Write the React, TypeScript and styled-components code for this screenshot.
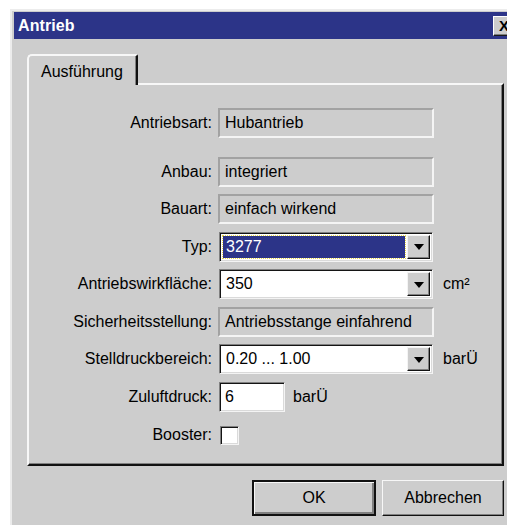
import React from "react";
import styled, { createGlobalStyle } from "styled-components";

const Global = createGlobalStyle`
  html, body {
    margin: 0;
    padding: 0;
    background: #ffffff;
    overflow: hidden;
  }
  body {
    font-family: "Liberation Sans", Arial, sans-serif;
    font-size: 16px;
    color: #000;
  }
`;

const GRAY = "#cdcdcd";
const NAVY = "#2c3488";

const Page = styled.div`
  width: 507px;
  height: 525px;
  padding: 9px 0 0 10px;
  box-sizing: border-box;
  overflow: hidden;
`;

const Window = styled.div`
  width: 520px;
  height: 540px;
  box-sizing: border-box;
  background: ${GRAY};
  border-top: 2px solid #ececec;
  border-left: 2px solid #ececec;
  padding: 1px 0 0 2px;
`;

const TitleBar = styled.div`
  height: 27px;
  background: ${NAVY};
  display: flex;
  align-items: center;
  justify-content: space-between;
  padding-left: 4px;
`;

const Title = styled.span`
  color: #fff;
  font-weight: bold;
  font-size: 16px;
  letter-spacing: 0.1px;
`;

const CloseButton = styled.div`
  width: 22px;
  height: 20px;
  margin-right: 15px;
  box-sizing: border-box;
  background: ${GRAY};
  border: 1px solid;
  border-color: #ffffff #1a1a1a #1a1a1a #ffffff;
  box-shadow: inset -1px -1px 0 #808080;
  display: flex;
  align-items: center;
  justify-content: center;
  font-weight: bold;
  font-size: 15px;
  line-height: 1;
  color: #000;
`;

const Body = styled.div`
  padding: 15px 0 0 13px;
`;

const TabStrip = styled.div`
  display: flex;
  position: relative;
  z-index: 1;
`;

const Tab = styled.div`
  height: 31px;
  width: 111px;
  box-sizing: border-box;
  background: ${GRAY};
  border-top: 2px solid #f7f7f7;
  border-left: 2px solid #f7f7f7;
  border-right: 2px solid #111;
  border-top-left-radius: 5px;
  border-top-right-radius: 2px;
  box-shadow: inset -1px 0 0 #808080;
  padding: 7px 0 0 12px;
  margin-bottom: -2px;
  font-size: 16px;
`;

const Panel = styled.div`
  width: 477px;
  height: 383px;
  box-sizing: border-box;
  border-top: 2px solid #f7f7f7;
  border-left: 2px solid #f7f7f7;
  border-right: 2px solid #111;
  border-bottom: 2px solid #111;
  box-shadow: inset -1px -1px 0 #808080;
  padding-top: 23px;
  display: flex;
  flex-direction: column;
  gap: 7.5px;
`;

const Row = styled.div<{ $extra?: number }>`
  display: flex;
  align-items: center;
  height: 30px;
  margin-top: ${(p) => p.$extra ?? 0}px;
`;

const Label = styled.div`
  width: 183px;
  text-align: right;
  margin-right: 6px;
  white-space: nowrap;
`;

const ReadOnly = styled.div`
  width: 216px;
  height: 30px;
  box-sizing: border-box;
  border: 2px solid;
  border-color: #a2a2a2 #f4f4f4 #f4f4f4 #a2a2a2;
  padding-left: 5px;
  display: flex;
  align-items: center;
  white-space: nowrap;
`;

const Sunken = styled.div<{ $w: number }>`
  width: ${(p) => p.$w}px;
  height: 30px;
  box-sizing: border-box;
  margin-left: 1px;
  background: #fff;
  border: 1px solid;
  border-color: #808080 #f4f4f4 #f4f4f4 #808080;
  box-shadow: inset 1px 1px 0 #141414, inset -1px -1px 0 #dadada;
  display: flex;
  align-items: stretch;
  padding: 2px;
`;

const ComboText = styled.div<{ $selected?: boolean }>`
  flex: 1;
  display: flex;
  align-items: center;
  padding-left: 3px;
  margin: 1px 2px 1px 1px;
  background: ${(p) => (p.$selected ? NAVY : "transparent")};
  color: ${(p) => (p.$selected ? "#fff" : "#000")};
  outline: ${(p) => (p.$selected ? "1px dotted #e8d84a" : "none")};
`;

const DropButton = styled.div`
  width: 23px;
  box-sizing: border-box;
  background: ${GRAY};
  border: 1px solid;
  border-color: #f4f4f4 #111 #111 #f4f4f4;
  box-shadow: inset -1px -1px 0 #808080;
  display: flex;
  align-items: center;
  justify-content: center;
`;

const Arrow = styled.div`
  width: 0;
  height: 0;
  border-left: 5px solid transparent;
  border-right: 5px solid transparent;
  border-top: 6px solid #000;
  margin-top: 1px;
`;

const Unit = styled.span<{ $gap: number }>`
  margin-left: ${(p) => p.$gap}px;
`;

const TextInput = styled.div`
  width: 66px;
  height: 30px;
  box-sizing: border-box;
  margin-left: 1px;
  background: #fff;
  border: 1px solid;
  border-color: #808080 #f4f4f4 #f4f4f4 #808080;
  box-shadow: inset 1px 1px 0 #141414, inset -1px -1px 0 #dadada;
  display: flex;
  align-items: center;
  padding-left: 5px;
`;

const CheckBox = styled.div`
  width: 19px;
  height: 19px;
  box-sizing: border-box;
  margin-left: 2px;
  background: #fff;
  border: 1px solid;
  border-color: #808080 #f4f4f4 #f4f4f4 #808080;
  box-shadow: inset 1px 1px 0 #141414, inset -1px -1px 0 #dadada;
`;

const ButtonRow = styled.div`
  width: 477px;
  display: flex;
  justify-content: flex-end;
  gap: 6px;
  margin-top: 14px;
`;

const Button = styled.div<{ $default?: boolean }>`
  width: ${(p) => (p.$default ? 124 : 122)}px;
  height: 36px;
  box-sizing: border-box;
  background: ${GRAY};
  display: flex;
  align-items: center;
  justify-content: center;
  font-size: 16px;
  border: ${(p) => (p.$default ? "2px solid #111" : "1px solid")};
  border-color: ${(p) =>
    p.$default ? "#111" : "#f7f7f7 #111 #111 #f7f7f7"};
  box-shadow: ${(p) =>
    p.$default
      ? "inset 1px 1px 0 #f7f7f7, inset -2px -2px 0 #808080"
      : "inset -1px -1px 0 #808080"};
`;

type ComboProps = { value: string; selected?: boolean };

const Combo = ({ value, selected }: ComboProps) => (
  <Sunken $w={214}>
    <ComboText $selected={selected}>{value}</ComboText>
    <DropButton>
      <Arrow />
    </DropButton>
  </Sunken>
);

export default function App() {
  return (
    <>
      <Global />
      <Page>
        <Window>
          <TitleBar>
            <Title>Antrieb</Title>
            <CloseButton>X</CloseButton>
          </TitleBar>
          <Body>
            <TabStrip>
              <Tab>Ausführung</Tab>
            </TabStrip>
            <Panel>
              <Row>
                <Label>Antriebsart:</Label>
                <ReadOnly>Hubantrieb</ReadOnly>
              </Row>
              <Row $extra={11}>
                <Label>Anbau:</Label>
                <ReadOnly>integriert</ReadOnly>
              </Row>
              <Row>
                <Label>Bauart:</Label>
                <ReadOnly>einfach wirkend</ReadOnly>
              </Row>
              <Row>
                <Label>Typ:</Label>
                <Combo value="3277" selected />
              </Row>
              <Row>
                <Label>Antriebswirkfläche:</Label>
                <Combo value="350" />
                <Unit $gap={10}>cm²</Unit>
              </Row>
              <Row>
                <Label>Sicherheitsstellung:</Label>
                <ReadOnly>Antriebsstange einfahrend</ReadOnly>
              </Row>
              <Row>
                <Label>Stelldruckbereich:</Label>
                <Combo value="0.20 ... 1.00" />
                <Unit $gap={10}>barÜ</Unit>
              </Row>
              <Row>
                <Label>Zuluftdruck:</Label>
                <TextInput>6</TextInput>
                <Unit $gap={8}>barÜ</Unit>
              </Row>
              <Row $extra={1}>
                <Label>Booster:</Label>
                <CheckBox />
              </Row>
            </Panel>
            <ButtonRow>
              <Button $default>OK</Button>
              <Button>Abbrechen</Button>
            </ButtonRow>
          </Body>
        </Window>
      </Page>
    </>
  );
}
